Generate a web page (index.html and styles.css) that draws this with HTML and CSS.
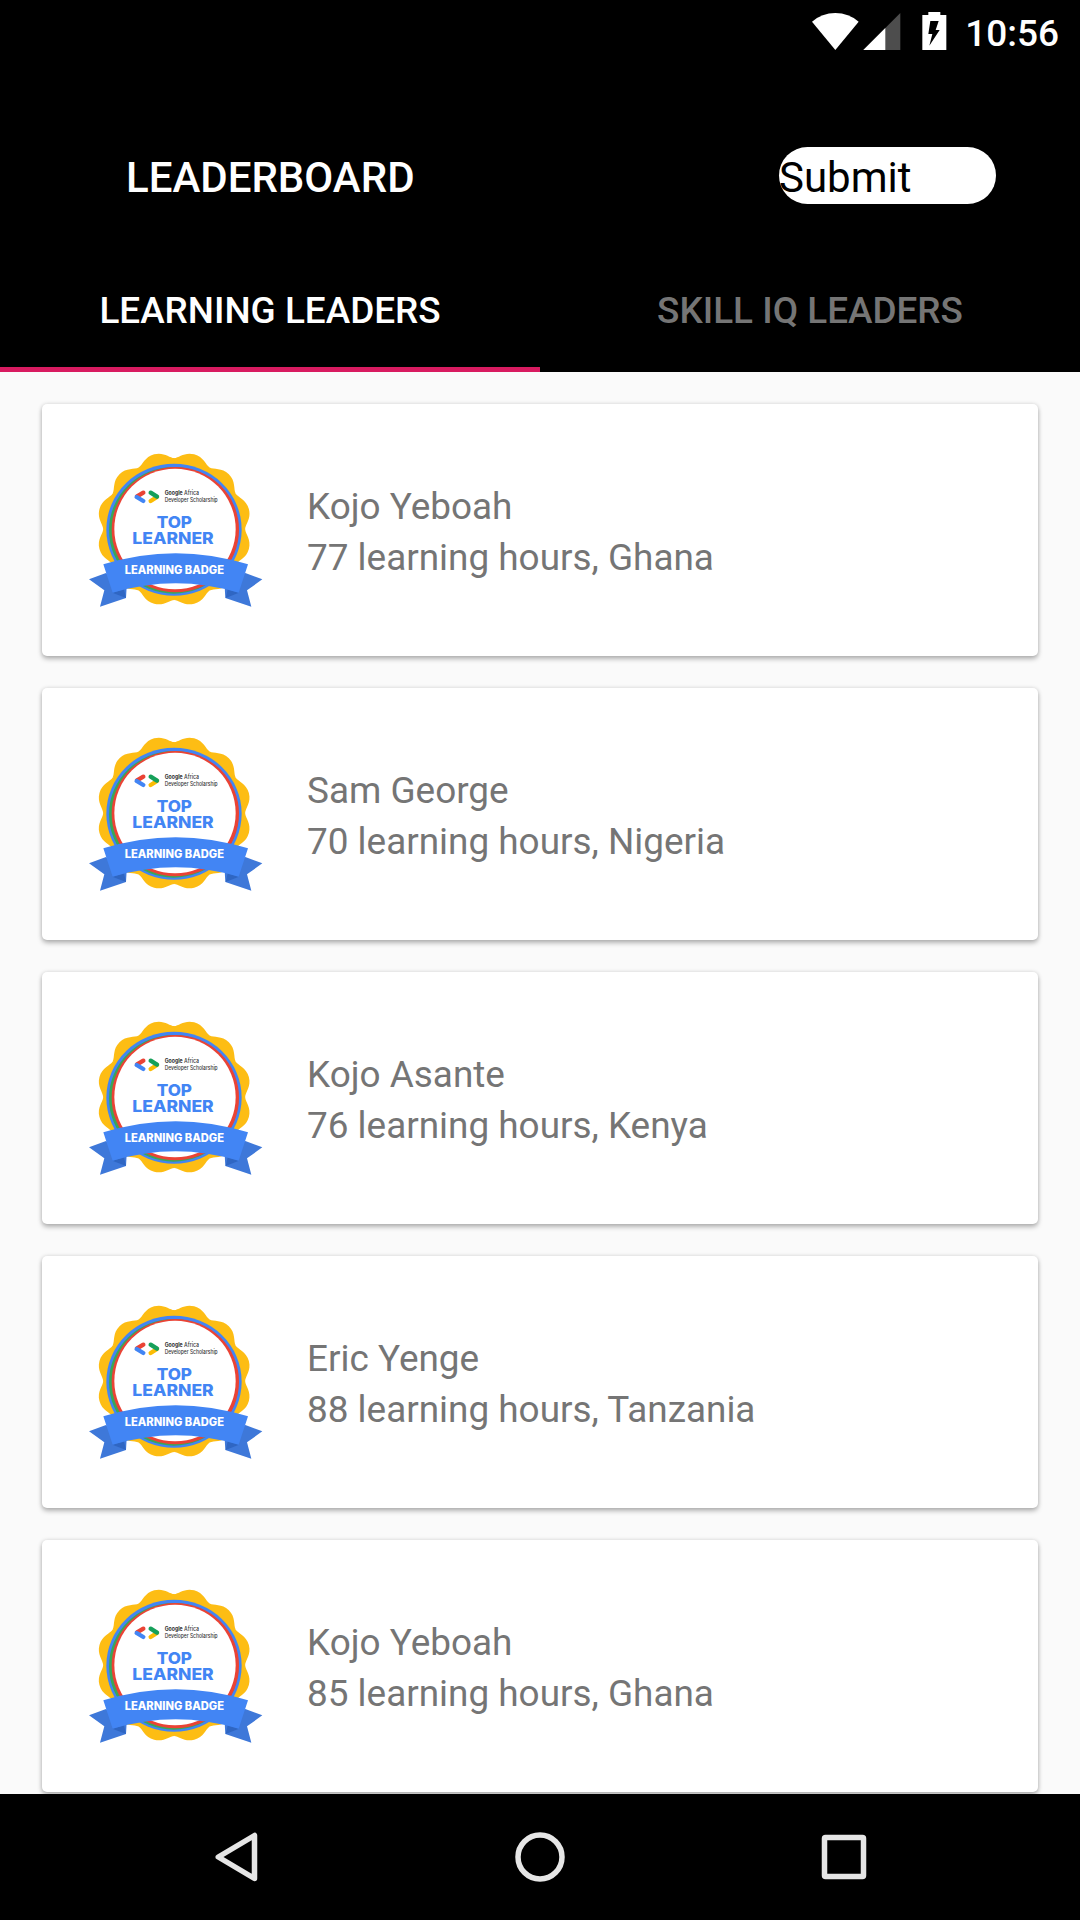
FILE: index.html
```html
<!DOCTYPE html>
<html lang="en">
<head>
<meta charset="utf-8">
<title>Leaderboard</title>
<link rel="stylesheet" href="styles.css">
</head>
<body>
<svg class="defs" width="0" height="0" aria-hidden="true">
  <defs>
    <path id="petal" d="M0 0L-55.400 -205.600C-41 -210 -30 -232 0 -232C30 -232 41 -210 55.400 -205.600Z"/>
    <g id="petal-pair"><use href="#petal" transform="rotate(15)"/><use href="#petal" transform="rotate(45)"/></g>
    <symbol id="badge" viewBox="0 0 570 540">
      <g transform="translate(282.5 267)" fill="#fdbd14">
        <circle r="210"/>
        <use href="#petal-pair"/>
        <use href="#petal-pair" transform="rotate(60)"/>
        <use href="#petal-pair" transform="rotate(120)"/>
        <use href="#petal-pair" transform="rotate(180)"/>
        <use href="#petal-pair" transform="rotate(240)"/>
        <use href="#petal-pair" transform="rotate(300)"/>
      </g>
      <ellipse cx="282" cy="269" rx="203" ry="198" fill="#4285f4"/>
      <ellipse cx="281" cy="271" rx="194" ry="190" fill="#3aa757"/>
      <ellipse cx="286" cy="269" rx="191" ry="188" fill="#ea4335"/>
      <ellipse cx="285" cy="267" rx="182" ry="181" fill="#fff"/>
      <g fill="none" stroke-width="13" stroke-linecap="round">
        <path stroke="#ea4335" d="M171 169L190 158"/>
        <path stroke="#4285f4" d="M170 171L190 183"/>
        <path stroke="#fbbc04" d="M231 171L212 183"/>
        <path stroke="#16a05a" d="M212 158L231 170"/>
      </g>
      <text class="badge-small" x="254" y="166" textLength="103" lengthAdjust="spacingAndGlyphs"><tspan class="badge-strong">Google</tspan> Africa</text>
      <text class="badge-small" x="254" y="185" textLength="159" lengthAdjust="spacingAndGlyphs">Developer Scholarship</text>
      <text class="badge-title" x="230" y="265" textLength="106" lengthAdjust="spacingAndGlyphs">TOP</text>
      <text class="badge-title" x="157" y="311" textLength="244" lengthAdjust="spacingAndGlyphs">LEARNER</text>
      <path fill="#3e78d9" d="M27 418L78 399L140 440L138 474L60 500L73 451Z"/>
      <path fill="#3e78d9" d="M547 418L496 399L434 440L436 474L514 500L501 451Z"/>
      <path fill="#2f66c3" d="M97 458L138 474L132 448Z"/>
      <path fill="#2f66c3" d="M477 458L437 474L443 448Z"/>
      <path fill="#4285f4" d="M70 373Q287 306 504 373L476 458Q287 401 98 458Z"/>
      <text class="badge-ribbon" x="134" y="402" textLength="298" lengthAdjust="spacingAndGlyphs">LEARNING BADGE</text>
    </symbol>
  </defs>
</svg>

<div class="screen">
  <header class="header">
    <div class="status">
      <svg class="status-icons" viewBox="0 0 408 120">
        <path fill="#fff" d="M0 29Q30 3 70 3Q110 3 140 29L70 114Z"/>
        <path fill="#4d4d4d" d="M265 3V114H154Z"/>
        <path fill="#fff" d="M220 48V114H154Z"/>
        <path fill="#fff" d="M331 9H349V0H385V9H403V114H331Z"/>
        <path fill="#000" d="M355 27H380L371 54H383L352 101L361 66H349Z"/>
      </svg>
      <span class="clock">10:56</span>
    </div>
    <div class="toolbar">
      <h1 class="title">LEADERBOARD</h1>
      <button class="submit">Submit</button>
    </div>
    <nav class="tabs">
      <a class="tab tab-active">LEARNING LEADERS</a>
      <a class="tab">SKILL IQ LEADERS</a>
    </nav>
  </header>

  <main class="list">
    <article class="card">
      <svg class="badge"><use href="#badge"/></svg>
      <div class="info"><div>Kojo Yeboah</div><div>77 learning hours, Ghana</div></div>
    </article>
    <article class="card">
      <svg class="badge"><use href="#badge"/></svg>
      <div class="info"><div>Sam George</div><div>70 learning hours, Nigeria</div></div>
    </article>
    <article class="card">
      <svg class="badge"><use href="#badge"/></svg>
      <div class="info"><div>Kojo Asante</div><div>76 learning hours, Kenya</div></div>
    </article>
    <article class="card">
      <svg class="badge"><use href="#badge"/></svg>
      <div class="info"><div>Eric Yenge</div><div>88 learning hours, Tanzania</div></div>
    </article>
    <article class="card">
      <svg class="badge"><use href="#badge"/></svg>
      <div class="info"><div>Kojo Yeboah</div><div>85 learning hours, Ghana</div></div>
    </article>
  </main>

  <footer class="navbar">
    <svg class="nav-icon" viewBox="0 0 60 60"><path d="M48.500 8.500V51.500L12.300 30Z"/></svg>
    <svg class="nav-icon" viewBox="0 0 60 60"><circle cx="30" cy="30" r="22"/></svg>
    <svg class="nav-icon" viewBox="0 0 60 60"><rect x="10.500" y="10.500" width="39" height="39" rx="1"/></svg>
  </footer>
</div>
</body>
</html>
```
FILE: styles.css
```css
* { box-sizing: border-box; }

body {
  margin: 0;
  background: #fafafa;
  font-family: Roboto, "Liberation Sans", sans-serif;
}

.defs { display: block; }

.screen {
  display: flex;
  flex-direction: column;
  width: 1080px;
  height: 1920px;
  overflow: hidden;
}

.header {
  flex: none;
  height: 372px;
  background: #000;
  color: #fff;
}

.status {
  display: flex;
  justify-content: flex-end;
  height: 63px;
  padding: 12px 21px 0 0;
}

.status-icons { width: 136px; height: 40px; }

.clock {
  margin-left: 17px;
  font-size: 37px;
  font-weight: 500;
  line-height: 43px;
}

.toolbar {
  display: flex;
  justify-content: space-between;
  height: 183px;
  padding: 84px 84px 0 126px;
}

.title {
  margin: 0;
  font-size: 42px;
  font-weight: 500;
  line-height: 62px;
}

.submit {
  width: 217px;
  height: 57px;
  padding: 4px 0 0;
  border: 0;
  border-radius: 28.5px;
  background: #fff;
  color: #000;
  font: 42px/53px Roboto, "Liberation Sans", sans-serif;
  text-align: left;
}

.tabs { display: grid; grid-template-columns: 1fr 1fr; }

.tab {
  height: 126px;
  padding-top: 43px;
  border-bottom: 5px solid transparent;
  color: #757575;
  font-size: 36.9px;
  font-weight: 500;
  line-height: 44px;
  text-align: center;
}

.tab-active { border-color: #d81b60; color: #fff; }

.list {
  display: flex;
  flex: 1;
  flex-direction: column;
  gap: 32px;
  min-height: 0;
  padding: 32px 42px 0;
  overflow: hidden;
}

.card {
  display: flex;
  flex: none;
  align-items: center;
  height: 252px;
  padding-left: 38px;
  border-radius: 5px;
  background: #fff;
  box-shadow: 0 3px 5px rgba(0, 0, 0, .27), 0 0 4px rgba(0, 0, 0, .13);
}

.badge { width: 190px; height: 180px; }

.badge-title { fill: #4285f4; font: 800 48px Inter, sans-serif; }
.badge-ribbon { fill: #fff; font: 800 34px Inter, sans-serif; }
.badge-small { fill: #333; font: 500 17px Inter, sans-serif; }
.badge-strong { font-weight: 700; }

.info {
  margin-left: 37px;
  padding-top: 4px;
  color: #757575;
  font-size: 36.9px;
  line-height: 51px;
}

.navbar {
  display: grid;
  flex: none;
  grid-template-columns: repeat(3, 304px);
  place-content: center;
  place-items: center;
  height: 126px;
  background: #000;
}

.nav-icon {
  width: 60px;
  height: 60px;
  fill: none;
  stroke: #e6e6e6;
  stroke-width: 5.5;
  stroke-linejoin: round;
}
```
